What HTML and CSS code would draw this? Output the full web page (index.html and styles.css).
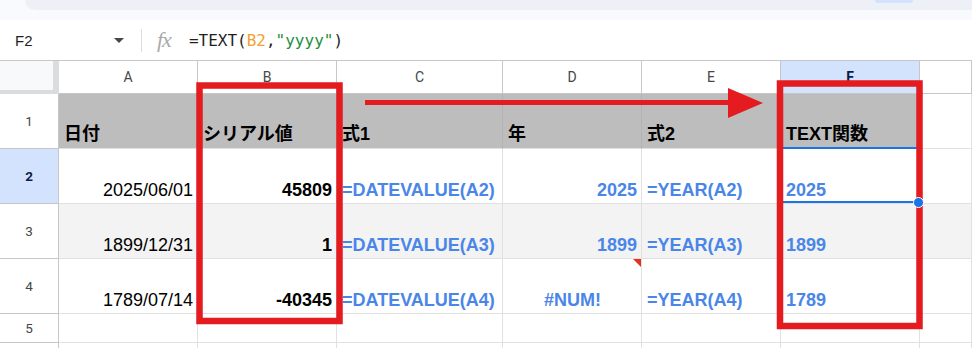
FILE: index.html
```html
<!DOCTYPE html>
<html lang="ja">
<head>
<meta charset="utf-8">
<title>TEXT関数 - シート</title>
<link rel="stylesheet" href="styles.css">
</head>
<body>
  <div class="chrome">
    <div class="tabstrip"><span class="pill"></span></div>
  </div>

  <div class="fbar">
    <div class="namebox">
      <span class="ref">F2</span>
      <span class="caret"></span>
    </div>
    <div class="sep"></div>
    <span class="fx">fx</span>
    <div class="formula">=TEXT(<span class="tok-ref">B2</span>,<span class="tok-str">"yyyy"</span>)</div>
  </div>

  <div class="sheet">
    <!-- column headers -->
    <div class="corner"></div>
    <div class="ch">A</div>
    <div class="ch">B</div>
    <div class="ch">C</div>
    <div class="ch">D</div>
    <div class="ch">E</div>
    <div class="ch ch-active">F</div>
    <div class="ch"></div>

    <!-- row 1 -->
    <div class="rh">1</div>
    <div class="c hd">日付</div>
    <div class="c hd">シリアル値</div>
    <div class="c hd">式1</div>
    <div class="c hd">年</div>
    <div class="c hd">式2</div>
    <div class="c hd">TEXT関数</div>
    <div class="c"></div>

    <!-- row 2 -->
    <div class="rh rh-active">2</div>
    <div class="c r">2025/06/01</div>
    <div class="c r b">45809</div>
    <div class="c b blue">=DATEVALUE(A2)</div>
    <div class="c r b blue">2025</div>
    <div class="c b blue">=YEAR(A2)</div>
    <div class="c b blue sel">2025</div>
    <div class="c"></div>

    <!-- row 3 -->
    <div class="rh">3</div>
    <div class="c alt r">1899/12/31</div>
    <div class="c alt r b">1</div>
    <div class="c alt b blue">=DATEVALUE(A3)</div>
    <div class="c alt r b blue">1899</div>
    <div class="c alt b blue">=YEAR(A3)</div>
    <div class="c alt b blue">1899</div>
    <div class="c alt"></div>

    <!-- row 4 -->
    <div class="rh">4</div>
    <div class="c r">1789/07/14</div>
    <div class="c r b">-40345</div>
    <div class="c b blue">=DATEVALUE(A4)</div>
    <div class="c ctr b blue err">#NUM!</div>
    <div class="c b blue">=YEAR(A4)</div>
    <div class="c b blue">1789</div>
    <div class="c"></div>

    <!-- row 5 -->
    <div class="rh">5</div>
    <div class="c"></div>
    <div class="c"></div>
    <div class="c"></div>
    <div class="c"></div>
    <div class="c"></div>
    <div class="c"></div>
    <div class="c"></div>

    <!-- row 6 (only its top edge is in view) -->
    <div class="rh"></div>
    <div class="c"></div>
    <div class="c"></div>
    <div class="c"></div>
    <div class="c"></div>
    <div class="c"></div>
    <div class="c"></div>
    <div class="c"></div>
  </div>

  <!-- red callouts drawn over the sheet -->
  <svg class="marks" width="972" height="348" viewBox="0 0 972 348" aria-hidden="true">
    <rect x="199.5" y="85.5" width="140" height="235.5" fill="none" stroke="#e41b1f" stroke-width="6.5"/>
    <rect x="780" y="83.5" width="139.5" height="242.5" fill="none" stroke="#e41b1f" stroke-width="6.5"/>
    <line x1="365" y1="102.5" x2="732" y2="102.5" stroke="#e41b1f" stroke-width="5"/>
    <polygon points="728,88 763,103 728,118" fill="#e41b1f"/>
  </svg>
</body>
</html>
```

FILE: styles.css
```css
* {
  box-sizing: border-box;
}

body {
  margin: 0;
  width: 972px;
  height: 348px;
  overflow: hidden;
  position: relative;
  background: #fff;
  font-family: "Liberation Sans", "Noto Sans CJK JP", sans-serif;
  color: #000;
}

/* browser-ish strip above the formula bar */
.chrome {
  height: 20px;
  background: #f8fafd;
}

.tabstrip {
  display: flex;
  margin-left: 25px;
  height: 10px;
  background: #edf1f7;
  border-bottom-left-radius: 14px;
}

.pill {
  margin-left: 850px;
  width: 38px;
  height: 3px;
  background: #d3e3fd;
  border-radius: 0 0 6px 6px;
}

/* formula bar */
.fbar {
  display: flex;
  align-items: center;
  height: 41px;
  border-bottom: 1px solid #c7c7c7;
}

.namebox {
  display: flex;
  align-items: center;
  justify-content: space-between;
  width: 133px;
  padding: 0 9px 0 15px;
}

.ref {
  font-size: 15px;
  color: #1f1f1f;
}

.caret {
  width: 0;
  height: 0;
  border-left: 5px solid transparent;
  border-right: 5px solid transparent;
  border-top: 5px solid #444746;
}

.sep {
  width: 1px;
  height: 23px;
  margin-left: 8px;
  background: #dadce0;
}

.fx {
  margin-left: 15px;
  font-family: "Liberation Serif", serif;
  font-style: italic;
  font-size: 22px;
  color: #a9a9a9;
  letter-spacing: -1px;
}

.formula {
  margin-left: 18px;
  font-family: "DejaVu Sans Mono", monospace;
  font-size: 16px;
  color: #1f1f1f;
  white-space: pre;
}

.tok-ref {
  color: #f5a031;
}

.tok-str {
  color: #1e8e3e;
}

/* sheet grid */
.sheet {
  display: grid;
  grid-template-columns: 59px 139px 139px 166px 139px 139px 139px 1fr;
  grid-template-rows: 33px 55px 55px 55px 55px 29px 55px;
}

.corner {
  background: #f8f9fa;
  border-right: 6px solid #dadcde;
  border-bottom: 4px solid #dadcde;
}

.ch {
  display: flex;
  align-items: center;
  justify-content: center;
  font-family: Roboto, "Liberation Sans", sans-serif;
  font-size: 14px;
  color: #444746;
  border-right: 1px solid #c7c7c7;
  border-bottom: 1px solid #c7c7c7;
}

.ch-active {
  background: #d3e3fd;
  color: #0b1d47;
  font-weight: 700;
}

.rh {
  display: flex;
  align-items: center;
  justify-content: center;
  font-family: Roboto, "Liberation Sans", sans-serif;
  font-size: 13.5px;
  color: #444746;
  border-right: 1px solid #c7c7c7;
  border-bottom: 1px solid #c7c7c7;
}

.rh-active {
  background: #d3e3fd;
  color: #0b1d47;
  font-weight: 700;
}

.c {
  position: relative;
  display: flex;
  align-items: flex-end;
  padding: 0 4px 2px 5px;
  font-size: 18px;
  line-height: 21px;
  white-space: nowrap;
  border-right: 1px solid #e1e1e1;
  border-bottom: 1px solid #e1e1e1;
}

.hd {
  background: #bdbdbd;
  font-weight: 700;
  border-right-color: #b3b3b3;
  padding-bottom: 3px;
}

.alt {
  background: #f3f3f3;
}

.r {
  justify-content: flex-end;
}

.ctr {
  justify-content: center;
}

.b {
  font-weight: 700;
}

.blue {
  color: #4a86e8;
}

/* error marker in the cell's top-right corner */
.err::after {
  content: "";
  position: absolute;
  top: 0;
  right: 0;
  border-left: 8px solid transparent;
  border-top: 8px solid #e0321f;
}

/* active cell outline and fill handle */
.sel::before {
  content: "";
  position: absolute;
  top: -2px;
  left: -1px;
  right: -1px;
  bottom: 0;
  border: 2px solid #1a73e8;
}

.sel::after {
  content: "";
  position: absolute;
  z-index: 2;
  right: -5px;
  bottom: -5px;
  width: 9px;
  height: 9px;
  border-radius: 50%;
  background: #1a73e8;
  border: 1px solid #fff;
}

.marks {
  position: absolute;
  z-index: 1;
  top: 0;
  left: 0;
  pointer-events: none;
}
```
